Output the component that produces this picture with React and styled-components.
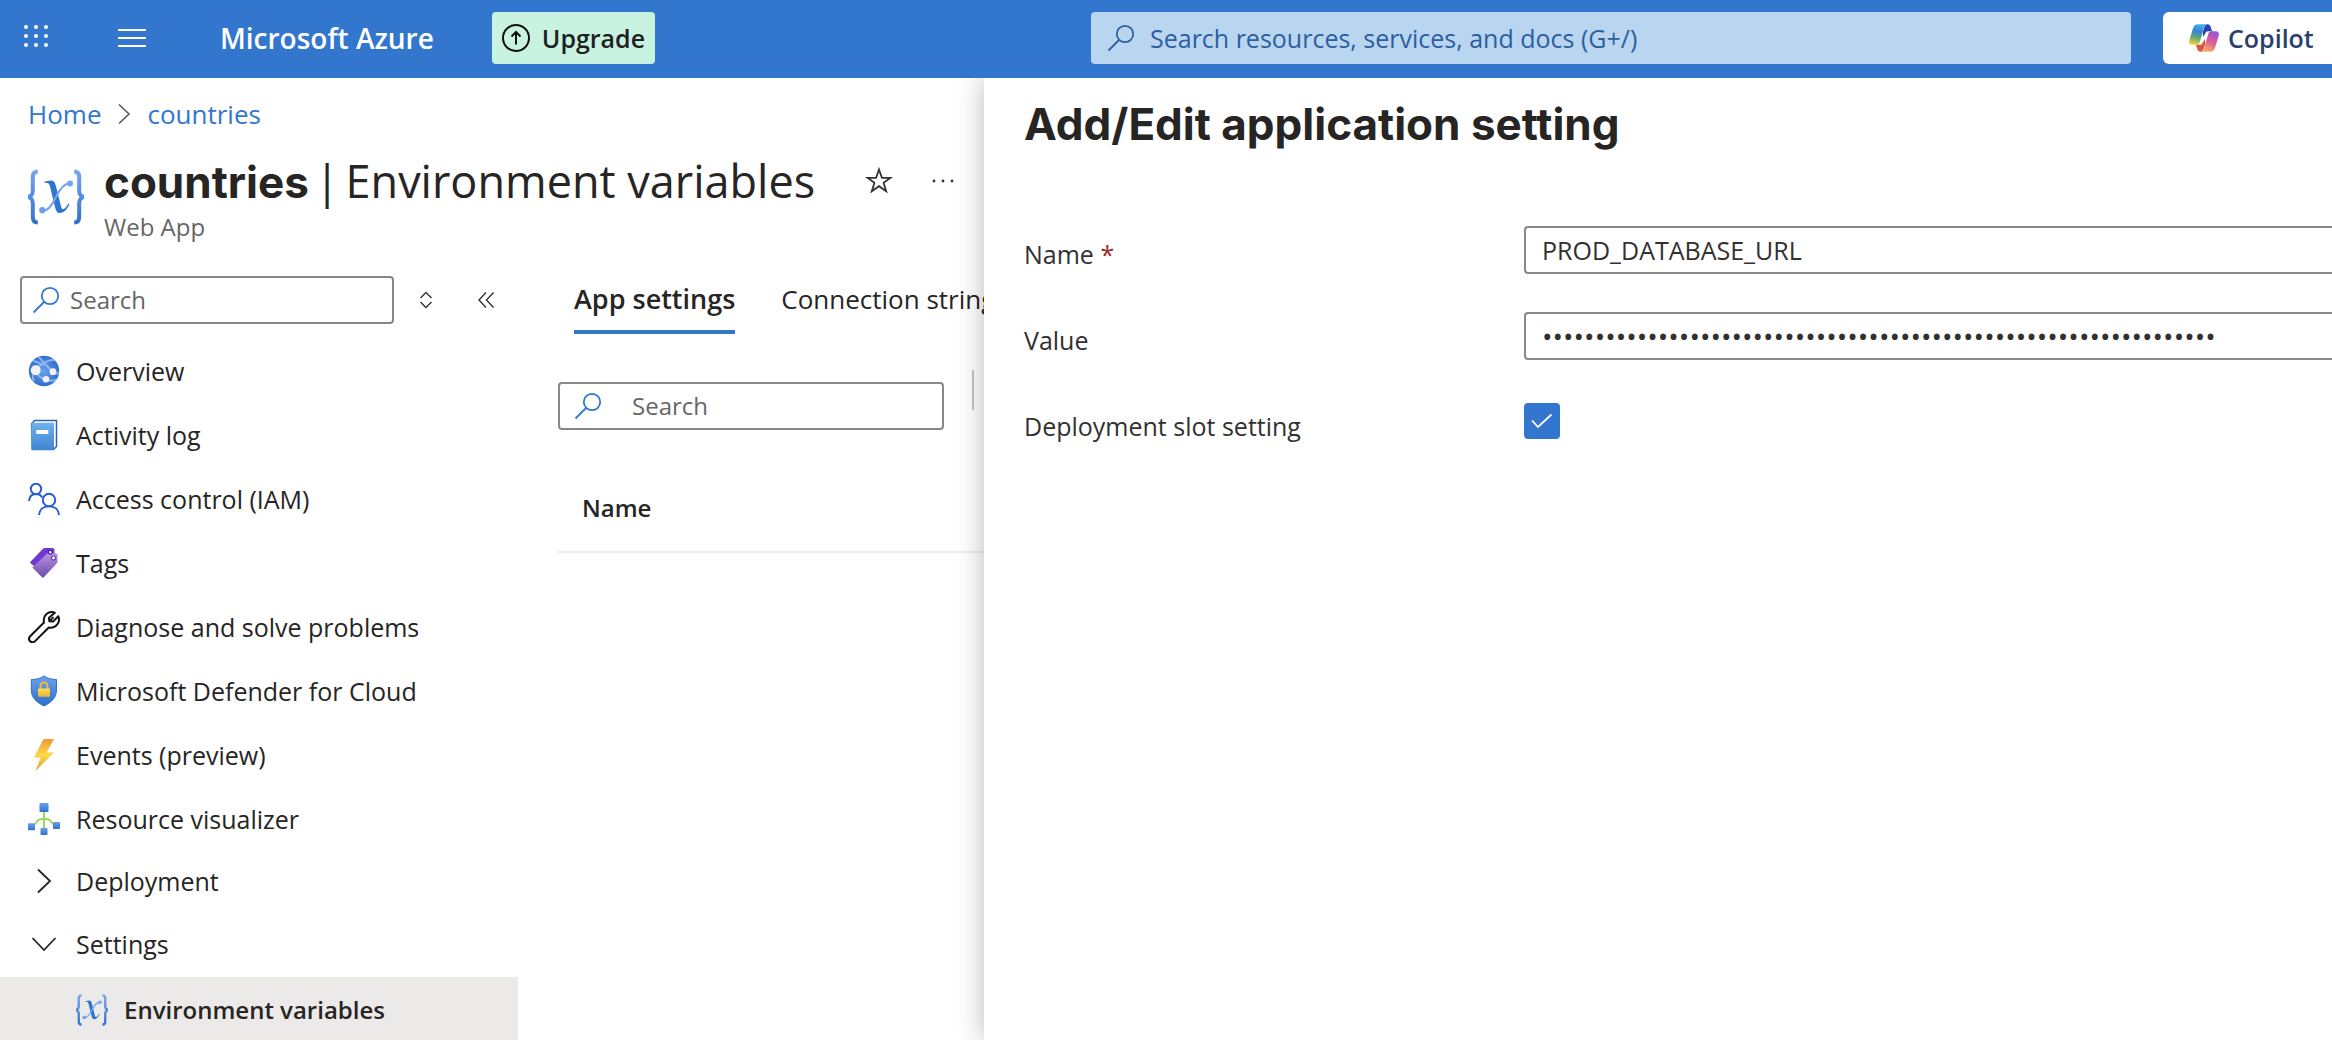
import React, { useState } from 'react';
import styled, { createGlobalStyle, css } from 'styled-components';

const GlobalStyle = createGlobalStyle`
  *, *::before, *::after { box-sizing: border-box; }
  body {
    margin: 0;
    background: #fff;
    color: #262524;
    font-family: "Open Sans", "Noto Sans", sans-serif;
    font-size: 25px;
    line-height: 36px;
  }
  button, input { font: inherit; color: inherit; }
  svg { display: block; flex: none; }
`;

/* ---------- shell ---------- */

const Page = styled.div`
  display: flex;
  flex-direction: column;
  height: 100vh;
  overflow: hidden;
`;

const TopBar = styled.header`
  display: flex;
  flex: none;
  padding: 12px 0 14px;
  background: #3376cd;
`;

const TopBarStart = styled.div`
  display: flex;
  flex: 1;
  align-items: center;
  padding-left: 22px;
`;

const Workspace = styled.div`
  display: grid;
  flex: 1;
  grid-template-columns: 984px minmax(0, 1fr);
  min-height: 0;
`;

const IconButton = styled.button`
  display: grid;
  place-items: center;
  padding: 0;
  border: 0;
  background: none;
  color: ${(p) => p.$color || '#333'};
`;

const MenuButton = styled(IconButton)`
  margin: 0 74px 0 68px;
`;

const Brand = styled.a`
  margin-right: 58px;
  color: #fff;
  font-size: 28px;
  font-weight: 600;
  text-decoration: none;
  white-space: nowrap;
`;

const UpgradeButton = styled.button`
  display: flex;
  align-items: center;
  gap: 12px;
  height: 52px;
  padding: 0 10px;
  border: 0;
  border-radius: 4px;
  background: #c8f3e1;
  color: #1f1f1f;
  font-weight: 600;
`;

const CopilotButton = styled.button`
  display: flex;
  flex: 0 0 169px;
  align-items: center;
  gap: 9px;
  padding: 0 0 0 26px;
  border: 0;
  border-radius: 6px 0 0 6px;
  background: #fff;
  color: #2b3f6c;
  font-weight: 600;
`;

const SearchBox = styled.label`
  display: flex;
  align-items: center;
  gap: 10px;
  width: 374px;
  height: 48px;
  padding: 0 10px;
  border: 2px solid #888;
  border-radius: 4px;
  background: #fff;
  color: #3376cd;

  input {
    flex: 1;
    min-width: 0;
    padding: 0;
    border: 0;
    outline: 0;
    background: none;
    color: #262524;
    font-size: 24px;
  }
  input::placeholder { color: #666; opacity: 1; }
`;

const GlobalSearch = styled(SearchBox)`
  flex: 0 1 1040px;
  gap: 15px;
  height: 52px;
  margin-right: 32px;
  padding: 0 16px;
  border: 0;
  background: #b9d5ef;
  color: #2b5f9f;

  input { font-size: 25px; }
  input::placeholder { color: #2b5f9f; }
`;

const ToolbarSearch = styled(SearchBox)`
  gap: 30px;
  width: 386px;
  margin-top: 12px;
  padding: 0 14px;
`;

/* ---------- resource blade ---------- */

const Blade = styled.div`
  display: flex;
  flex-direction: column;
  min-width: 0;
  overflow: hidden;
`;

const Breadcrumb = styled.nav`
  display: flex;
  align-items: center;
  gap: 16px;
  padding: 18px 28px 0;
  color: #555;
  font-size: 26px;

  a { color: #3376cd; text-decoration: none; }
`;

const BladeHeader = styled.div`
  display: flex;
  align-items: center;
  gap: 20px;
  margin-top: 19px;
  padding-left: 28px;
`;

const TitleLine = styled.div`
  display: flex;
  align-items: center;
  gap: 36px;
`;

const BladeTitle = styled.h1`
  display: flex;
  align-items: baseline;
  gap: 6px;
  height: 60px;
  margin: 0 14px 0 0;
  font-size: 45px;
  font-weight: 400;
  line-height: 60px;
  white-space: nowrap;

  strong { font-family: Inter, sans-serif; font-size: 44px; font-weight: 700; }
`;

const Subtitle = styled.p`
  margin: 0;
  color: #666;
  font-size: 24px;
  line-height: 32px;
`;

const BladeBody = styled.div`
  display: grid;
  flex: 1;
  grid-template-columns: 518px minmax(0, 1fr);
  min-height: 0;
`;

const Sidebar = styled.nav`
  padding-top: 33px;
`;

const SidebarTools = styled.div`
  display: flex;
  align-items: center;
  gap: 20px;
  margin-bottom: 15px;
  padding-left: 20px;
`;

const SidebarButtons = styled.div`
  display: flex;
  gap: 36px;
`;

const MenuList = styled.ul`
  display: grid;
  gap: ${(p) => (p.$sections ? '3px' : '0')};
  margin: 0;
  padding: 0;
  list-style: none;
`;

const rowStyle = css`
  display: flex;
  align-items: center;
  gap: 16px;
  width: 100%;
  padding: 0 28px;
  border: 0;
  background: none;
  color: #262524;
  text-align: left;
  text-decoration: none;
  white-space: nowrap;
`;

const MenuLink = styled.a`
  ${rowStyle}
  height: 64px;
`;

const SectionButton = styled.button`
  ${rowStyle}
  height: 60px;
`;

const ActiveLink = styled.a`
  ${rowStyle}
  height: 66px;
  padding-left: 76px;
  background: #ebeae9;
  font-size: 24px;
  font-weight: 600;
`;

const Content = styled.main`
  padding: 38px 0 0 40px;
`;

const Tabs = styled.div`
  display: flex;
  gap: 46px;
  padding-left: 16px;
`;

const Tab = styled.button`
  padding: 0 0 13px;
  border: 0;
  border-bottom: 4px solid ${(p) => (p.$active ? '#3376cd' : 'transparent')};
  background: none;
  font-size: ${(p) => (p.$active ? '27px' : '26px')};
  font-weight: ${(p) => (p.$active ? 600 : 400)};
  white-space: nowrap;
`;

const Toolbar = styled.div`
  display: flex;
  align-items: flex-start;
  gap: 28px;
  margin-top: 36px;
`;

const Divider = styled.span`
  width: 2px;
  height: 40px;
  background: #c4c4c4;
`;

const SettingsTable = styled.table`
  width: 100%;
  margin-top: 34px;
  border-collapse: collapse;

  th {
    height: 88px;
    padding: 0 24px;
    border-bottom: 2px solid #eee;
    font-size: 24px;
    font-weight: 600;
    text-align: left;
  }
`;

/* ---------- edit panel ---------- */

const Panel = styled.section`
  z-index: 1;
  padding: 16px 0 0 40px;
  background: #fff;
  box-shadow: 0 0 26px rgba(0, 0, 0, 0.28);
  clip-path: inset(0 0 0 -40px);
`;

const PanelTitle = styled.h2`
  margin: 0 0 72px;
  font-family: Inter, sans-serif;
  font-size: 44px;
  font-weight: 700;
  line-height: 60px;
`;

const Form = styled.form`
  display: grid;
  gap: 38px;
`;

const Field = styled.div`
  display: grid;
  grid-template-columns: 500px minmax(0, 1fr);
  align-items: start;
  height: 48px;
`;

const FieldLabel = styled.label`
  padding-top: 10px;
  color: #323130;
`;

const Required = styled.span`
  color: #a4262c;
`;

const TextInput = styled.input`
  width: 100%;
  height: 48px;
  padding: 0 0 0 16px;
  border: 2px solid #888;
  border-right: 0;
  border-radius: 4px 0 0 4px;
  outline: 0;
  background: #fff;
  color: #323130;
  font-size: ${(p) => (p.type === 'password' ? '28px' : '25px')};
`;

const CheckBox = styled.input`
  appearance: none;
  width: 36px;
  height: 36px;
  margin: 5px 0 0;
  border: 2px solid #3376cd;
  border-radius: 4px;

  &:checked {
    background: #3376cd
      url("data:image/svg+xml,%3Csvg xmlns='http://www.w3.org/2000/svg' viewBox='0 0 32 32'%3E%3Cpath d='M6 15.500l6 6.500L25.500 9.500' fill='none' stroke='white' stroke-width='1.800'/%3E%3C/svg%3E")
      center / 100% no-repeat;
  }
`;

/* ---------- icons ---------- */

const Svg = ({ w = 32, h = w, box = `0 0 ${w} ${h}`, children, ...rest }) => (
  <svg width={w} height={h} viewBox={box} fill="none" aria-hidden="true" {...rest}>
    {children}
  </svg>
);

const Gradient = ({ id, from, to, mid }) => (
  <linearGradient id={id} x1="0" y1="0" x2="0" y2="1">
    <stop offset="0" stopColor={from} />
    {mid && <stop offset="0.5" stopColor={mid} />}
    <stop offset="1" stopColor={to} />
  </linearGradient>
);

const AppsIcon = () => (
  <Svg w={28}>
    {[3, 12, 21].map((y) => [4, 14, 24].map((x) => <circle key={`${x}-${y}`} cx={x} cy={y} r="2" fill="#fff" />))}
  </Svg>
);

const HamburgerIcon = () => (
  <Svg w={28}><path d="M0 6h28M0 14h28M0 22h28" stroke="#fff" strokeWidth="2" /></Svg>
);

const UpgradeIcon = () => (
  <Svg w={28} stroke="#111" strokeWidth="2">
    <circle cx="14" cy="14" r="13" />
    <path d="M14 20.5V8.5M9.5 12.5L14 8l4.500 4.500" />
  </Svg>
);

const SearchIcon = () => (
  <Svg w={28} stroke="currentColor" strokeWidth="1.800">
    <circle cx="18" cy="10" r="8.200" />
    <path d="M12 16L1.500 26.500" />
  </Svg>
);

const CopilotIcon = () => (
  <Svg w={30} h={28}>
    <defs>
      <linearGradient id="cpLeft" x1="0.600" y1="0" x2="0.400" y2="1">
        <stop offset="0" stopColor="#46b4e8" />
        <stop offset="0.350" stopColor="#3d7fd9" />
        <stop offset="0.650" stopColor="#5aa777" />
        <stop offset="1" stopColor="#efd23c" />
      </linearGradient>
      <linearGradient id="cpRight" x1="0.700" y1="0" x2="0.300" y2="1">
        <stop offset="0" stopColor="#9a55e0" />
        <stop offset="0.500" stopColor="#dc5b96" />
        <stop offset="1" stopColor="#f5b26b" />
      </linearGradient>
    </defs>
    <path d="M14 7.500L15.500 3C16.200 1 17 .3 18.500.3c1.800 0 2.600.9 3.100 2.500L22.400 5.500c.4 1.300 1 1.700 2.200 1.700H19c-1.500 0-2.200.8-2.700 2.300L14 13z" fill="#2340b8" />
    <path d="M16 20.500L14.500 25c-.7 2-1.500 2.700-3 2.700-1.800 0-2.600-.9-3.100-2.500L7.600 22.500c-.4-1.300-1-1.700-2.200-1.700H11c1.500 0 2.200-.8 2.700-2.300L16 15z" fill="#d9583c" />
    <path d="M8.500.3h10C16.500.3 15.700 1.500 15 3.800L10.800 18c-.6 2-1.500 2.800-3.300 2.800H3.200C.6 20.800-.4 18.800.3 16.300L4 4.200C4.800 1.500 6.200.3 8.500.3z" fill="url(#cpLeft)" />
    <path d="M21.500 27.700h-10c2 0 2.800-1.200 3.500-3.500L19.200 10c.6-2 1.500-2.800 3.300-2.800h4.300c2.600 0 3.600 2 2.900 4.500L26 23.800c-.8 2.700-2.200 3.900-4.500 3.900z" fill="url(#cpRight)" />
  </Svg>
);

const StarIcon = () => (
  <Svg w={28}>
    <path d="M14 2.500l2.900 8.300h8.600l-6.900 5.100 2.600 8.400L14 19.200l-7.200 5.100 2.600-8.400-6.900-5.100h8.600z" stroke="#333" strokeWidth="1.800" />
  </Svg>
);

const MoreIcon = () => (
  <Svg w={28} fill="#333">
    <circle cx="5" cy="14" r="1.400" /><circle cx="14" cy="14" r="1.400" /><circle cx="23" cy="14" r="1.400" />
  </Svg>
);

const Chevron = ({ w, h, d, stroke = 1.8 }) => (
  <Svg w={w} h={h}><path d={d} stroke="currentColor" strokeWidth={stroke} /></Svg>
);

const VariableIcon = ({ size, id }) => (
  <Svg w={size} box="0 0 56 56">
    <defs>
      <linearGradient id={id} gradientUnits="userSpaceOnUse" x1="0" y1="1" x2="0" y2="55">
        <stop offset="0" stopColor="#74a6ef" />
        <stop offset="1" stopColor="#2f71cc" />
      </linearGradient>
    </defs>
    <path
      d="M9.800 2.500C6 2.500 4.800 4.500 4.800 8v13.500C4.800 25 4 27 0 28c4 1 4.800 3 4.800 6.500V48c0 3.500 1.200 5.500 5 5.500M46.200 2.500c3.800 0 5 2 5 5.500v13.500c0 3.500.8 5.500 4.800 6.500-4 1-4.800 3-4.800 6.500V48c0 3.500-1.200 5.500-5 5.500"
      stroke={`url(#${id})`} strokeWidth="4"
    />
    <path d="M16.500 12.500L23 11.500c3 0 4 2 5 6l5.200 20.500c.6 2.200 1.600 2.600 3 1.700 1.600-1 3-3 4.300-5.200l1 .6C39 40.500 36 44 32 44c-3 0-4-2-5-6L22 17.500c-.8-3.400-2-4-5.500-3.700z" fill="#2f74d0" />
    <path d="M15 41.500c5 0 8-4 12.500-12.500C32 19 36 14.500 42 14" stroke="#74a6ef" strokeWidth="2.200" />
    <circle cx="14.300" cy="41.200" r="3.100" fill="#6c9feb" />
    <circle cx="42" cy="14.400" r="3" fill="#74a6ef" />
  </Svg>
);

const GlobeIcon = () => (
  <Svg>
    <defs>
      <radialGradient id="globe"><stop offset="0" stopColor="#6ba0ee" /><stop offset="1" stopColor="#3071cb" /></radialGradient>
      <clipPath id="globeClip"><circle cx="16" cy="16" r="15.200" /></clipPath>
    </defs>
    <circle cx="16" cy="16" r="15.200" fill="url(#globe)" />
    <g clipPath="url(#globeClip)">
      <path d="M8 15C13 8.500 20 4.500 28 4.500M10 1l7 8 8 8M25 17c2 2 4 2 7 1M8 16c2 5 6 8 10 9 5 1.500 9 .5 12-1M7 16c-3 3-3 6-1 10M16 10C12 9 9 6 5 6" stroke="#9cc3f7" strokeOpacity="0.800" strokeWidth="2" />
    </g>
    <circle cx="7.700" cy="15.300" r="5" fill="#f2f2f2" />
    <circle cx="25" cy="16.700" r="3.400" fill="#f2f2f2" />
    <circle cx="18" cy="24.300" r="3.300" fill="#f2f2f2" />
  </Svg>
);

const BookIcon = () => (
  <Svg>
    <defs><Gradient id="book" from="#6fb2ee" to="#3f85d3" /></defs>
    <path d="M3.500 5L6.500 1.500h22v26L25.500 30.500h-21z" fill="#fff" stroke="#2e65a8" strokeWidth="1.500" />
    <path d="M4 3.800h20.800c.8 0 1.200.4 1.200 1.200V31H4.500c-.8 0-1.200-.4-1.200-1.200V4.500z" fill="url(#book)" />
    <rect x="8.300" y="11" width="12" height="4" rx="0.500" fill="#fff" />
  </Svg>
);

const PeopleIcon = () => (
  <Svg stroke="#2a5cd6" strokeWidth="2">
    <circle cx="8" cy="6" r="5.200" />
    <path d="M1 18c.3-4.500 3-7 7-7 2.800 0 5 1.200 6.300 3.500" />
    <circle cx="21" cy="17" r="6.200" />
    <path d="M11 32c.6-5.500 4.500-8.800 10-8.800S30.500 26.500 31 32" />
  </Svg>
);

const TagIcon = () => (
  <Svg>
    <defs><Gradient id="tag" from="#b694e0" to="#6f4bad" /></defs>
    <path d="M15 1.800c.7-.6 1.200-.8 2-.8h7.500c1.300 0 2 .7 2 2v5L8 20.500l-5.500-4.300c-.5-.5-.5-1 0-1.500z" fill="#7038cf" />
    <path d="M18.500 7c.7-.6 1.200-.8 2-.8h7c1.300 0 2 .7 2 2v6.300c0 .8-.2 1.300-.8 1.900L15.800 30.300c-.6.6-1.200.6-1.800 0L4.300 20.500z" fill="url(#tag)" />
    <circle cx="22.300" cy="5.300" r="1.800" fill="#fff" stroke="#43208f" strokeWidth="1.200" />
    <circle cx="25.500" cy="11" r="2" fill="#fff" stroke="#6a3fb5" strokeWidth="1.200" />
  </Svg>
);

const WrenchIcon = () => (
  <Svg>
    <path
      d="M26.800 1.700C20.500-.6 14.500 4.500 16 11.500L2.200 25.200c-3.300 3.500 1.500 8.200 4.900 4.900L20.800 16.500c7 1.300 12-5 9.500-11.300l-5.200 5.300-3.800-.3-.3-3.500zM21.200 10.400l4.300-4.300"
      stroke="#111" strokeWidth="2" strokeLinejoin="round"
    />
  </Svg>
);

const ShieldIcon = () => (
  <Svg>
    <defs>
      <Gradient id="shield" from="#6fa2ec" to="#2c6fca" />
      <Gradient id="lock" from="#fbe04d" to="#eeb03b" />
    </defs>
    <path d="M16 1c3.500 2.500 7.500 3.400 12.500 3.500V15c0 8-5.500 12.500-12.500 16C9 27.500 3.300 23 3.300 15V4.500C8.500 4.400 12.500 3.500 16 1z" fill="url(#shield)" stroke="#3173cc" strokeWidth="1" />
    <path d="M12.500 14v-3a3.500 3.500 0 0 1 7 0v3" stroke="#f2bb3e" strokeWidth="2" />
    <rect x="10" y="13.500" width="12" height="8.300" rx="0.800" fill="url(#lock)" />
  </Svg>
);

const BoltIcon = () => (
  <Svg>
    <defs><Gradient id="bolt" from="#f0983a" mid="#fbd84b" to="#ee9a3a" /></defs>
    <path d="M15.500 0h10.500l-7.300 13.500H26L7.500 32l5.200-13.500H6z" fill="url(#bolt)" />
  </Svg>
);

const TopologyIcon = () => (
  <Svg>
    <defs><Gradient id="node" from="#6a9fec" to="#2f72cc" /></defs>
    <path d="M16 8v18M4 23c5-1 4-6.800 9-6.800h6c5 0 4 5.800 9 6.800" stroke="#95d550" strokeWidth="1.800" />
    <rect x="11.500" width="9" height="9" rx="0.800" fill="url(#node)" />
    <rect x="12.500" y="25" width="7" height="7" rx="0.800" fill="url(#node)" />
    <rect y="20.300" width="7" height="7" rx="0.800" fill="url(#node)" />
    <rect x="25" y="19" width="7" height="7" rx="0.800" fill="url(#node)" />
  </Svg>
);

/* ---------- page ---------- */

const menuItems = [
  ['Overview', GlobeIcon],
  ['Activity log', BookIcon],
  ['Access control (IAM)', PeopleIcon],
  ['Tags', TagIcon],
  ['Diagnose and solve problems', WrenchIcon],
  ['Microsoft Defender for Cloud', ShieldIcon],
  ['Events (preview)', BoltIcon],
  ['Resource visualizer', TopologyIcon],
];

export default function App() {
  const [name, setName] = useState('PROD_DATABASE_URL');
  const [value, setValue] = useState('x'.repeat(64));
  const [slot, setSlot] = useState(true);

  return (
    <Page>
      <GlobalStyle />
      <TopBar>
        <TopBarStart>
          <IconButton type="button" aria-label="Apps"><AppsIcon /></IconButton>
          <MenuButton type="button" aria-label="Menu"><HamburgerIcon /></MenuButton>
          <Brand href="#">Microsoft Azure</Brand>
          <UpgradeButton type="button"><UpgradeIcon />Upgrade</UpgradeButton>
        </TopBarStart>
        <GlobalSearch>
          <SearchIcon />
          <input type="text" placeholder="Search resources, services, and docs (G+/)" />
        </GlobalSearch>
        <CopilotButton type="button"><CopilotIcon />Copilot</CopilotButton>
      </TopBar>

      <Workspace>
        <Blade>
          <Breadcrumb>
            <a href="#">Home</a>
            <Chevron w={14} h={22} d="M2 1.500L12 11L2 20.500" stroke={1.5} />
            <a href="#">countries</a>
          </Breadcrumb>
          <BladeHeader>
            <VariableIcon size={56} id="varLarge" />
            <div>
              <TitleLine>
                <BladeTitle><strong>countries</strong><span>|</span><span>Environment variables</span></BladeTitle>
                <IconButton type="button" aria-label="Favorite"><StarIcon /></IconButton>
                <IconButton type="button" aria-label="More"><MoreIcon /></IconButton>
              </TitleLine>
              <Subtitle>Web App</Subtitle>
            </div>
          </BladeHeader>

          <BladeBody>
            <Sidebar>
              <SidebarTools>
                <SearchBox>
                  <SearchIcon />
                  <input type="text" placeholder="Search" />
                </SearchBox>
                <SidebarButtons>
                  <IconButton type="button" aria-label="Expand all"><Chevron w={24} h={24} stroke={1.4} d="M6.500 10L12 4.500l5.500 5.500M6.500 14l5.500 5.500 5.500-5.500" /></IconButton>
                  <IconButton type="button" aria-label="Collapse menu"><Chevron w={24} h={24} stroke={1.4} d="M12 4.500L5 12l7 7.500M19.500 4.500L12.500 12l7 7.500" /></IconButton>
                </SidebarButtons>
              </SidebarTools>
              <MenuList>
                {menuItems.map(([label, Icon]) => (
                  <li key={label}><MenuLink href="#"><Icon />{label}</MenuLink></li>
                ))}
              </MenuList>
              <MenuList $sections>
                <li><SectionButton type="button"><Chevron w={32} h={32} d="M10 4.500L22 16L10 27.500" />Deployment</SectionButton></li>
                <li><SectionButton type="button"><Chevron w={32} h={32} d="M4.500 10L16 22L27.500 10" />Settings</SectionButton></li>
                <li><ActiveLink href="#"><VariableIcon size={32} id="varSmall" />Environment variables</ActiveLink></li>
              </MenuList>
            </Sidebar>

            <Content>
              <Tabs>
                <Tab type="button" $active>App settings</Tab>
                <Tab type="button">Connection strings</Tab>
              </Tabs>
              <Toolbar>
                <ToolbarSearch>
                  <SearchIcon />
                  <input type="text" placeholder="Search" />
                </ToolbarSearch>
                <Divider />
              </Toolbar>
              <SettingsTable>
                <thead><tr><th scope="col">Name</th></tr></thead>
              </SettingsTable>
            </Content>
          </BladeBody>
        </Blade>

        <Panel>
          <PanelTitle>Add/Edit application setting</PanelTitle>
          <Form>
            <Field>
              <FieldLabel htmlFor="name">Name <Required>*</Required></FieldLabel>
              <TextInput id="name" type="text" value={name} onChange={(e) => setName(e.target.value)} />
            </Field>
            <Field>
              <FieldLabel htmlFor="value">Value</FieldLabel>
              <TextInput id="value" type="password" value={value} onChange={(e) => setValue(e.target.value)} />
            </Field>
            <Field>
              <FieldLabel htmlFor="slot">Deployment slot setting</FieldLabel>
              <CheckBox id="slot" type="checkbox" checked={slot} onChange={(e) => setSlot(e.target.checked)} />
            </Field>
          </Form>
        </Panel>
      </Workspace>
    </Page>
  );
}
